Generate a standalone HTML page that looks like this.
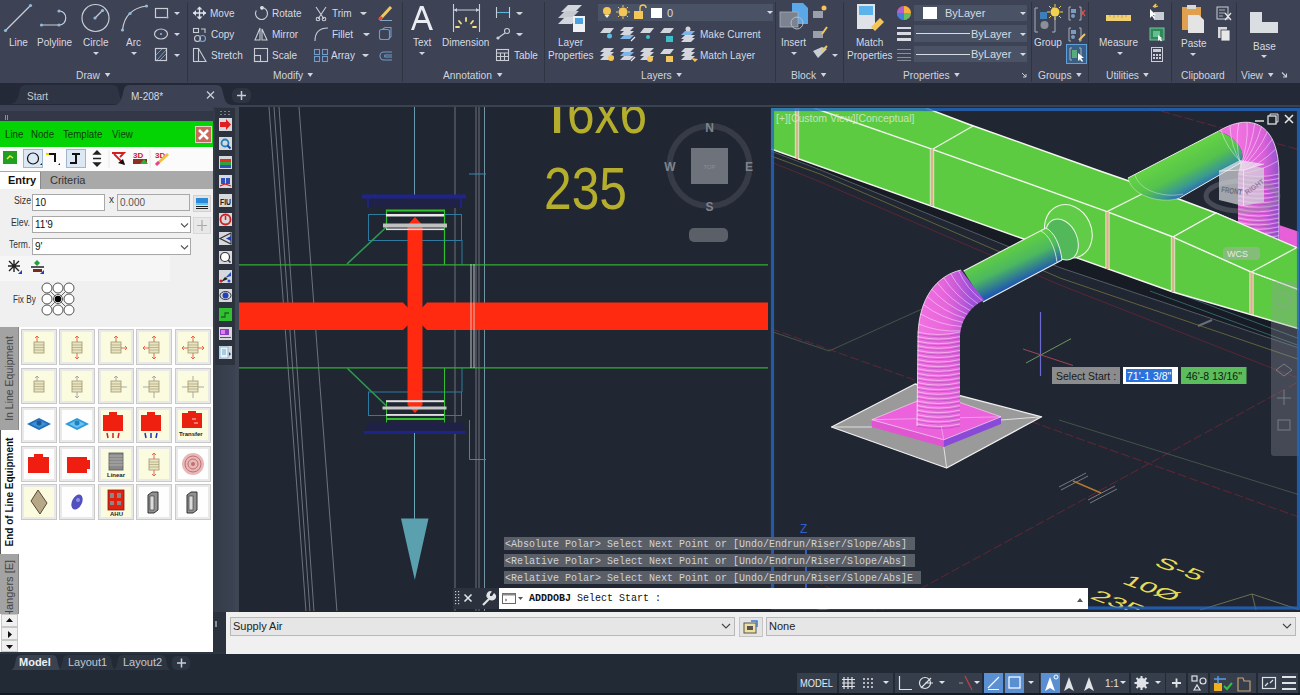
<!DOCTYPE html>
<html><head><meta charset="utf-8">
<style>
*{margin:0;padding:0;box-sizing:border-box}
html,body{width:1300px;height:695px;overflow:hidden;background:#222a35;font-family:"Liberation Sans",sans-serif}
.a{position:absolute}
#ribbon{left:0;top:0;width:1300px;height:83px;background:#3d4255}
.sep{position:absolute;top:2px;width:1px;height:80px;background:#2e3542}
.rt{position:absolute;color:#d6dbe3;font-size:11px;line-height:13px;white-space:nowrap;transform:scaleX(.91);transform-origin:0 0}
.pl{position:absolute;top:69px;color:#cfd5de;font-size:11px;line-height:13px;white-space:nowrap;transform:scaleX(.93);transform-origin:0 0}
.dd{display:inline-block;width:0;height:0;border-left:3px solid transparent;border-right:3px solid transparent;border-top:4px solid #d0d5dd;vertical-align:middle;margin-left:5px;position:relative;top:-1px}
.ar{position:absolute;width:0;height:0;border-left:3px solid transparent;border-right:3px solid transparent;border-top:3px solid #d0d5dd}
#tabs{left:0;top:83px;width:1300px;height:24px;background:#242937}
#draw{left:0;top:107px;width:1300px;height:505px;background:#212633}
svg{position:absolute;overflow:visible}
</style></head><body>
<div id="ribbon" class="a">
  <div class="sep" style="left:187px"></div>
  <div class="sep" style="left:402px"></div>
  <div class="sep" style="left:544px"></div>
  <div class="sep" style="left:775px"></div>
  <div class="sep" style="left:843px"></div>
  <div class="sep" style="left:1031px"></div>
  <div class="sep" style="left:1088px"></div>
  <div class="sep" style="left:1171px"></div>
  <div class="sep" style="left:1236px"></div>
  <!-- Draw -->
  <div class="rt" style="left:9px;top:36px">Line</div>
  <div class="rt" style="left:37px;top:36px">Polyline</div>
  <div class="rt" style="left:83px;top:36px">Circle</div>
  <div class="rt" style="left:126px;top:36px">Arc</div>
  <div class="ar" style="left:93px;top:52px"></div>
  <div class="ar" style="left:131px;top:52px"></div>
  <div class="pl" style="left:76px">Draw<span class="dd"></span></div>
  <!-- Modify -->
  <div class="rt" style="left:210px;top:7px">Move</div>
  <div class="rt" style="left:211px;top:28px">Copy</div>
  <div class="rt" style="left:211px;top:49px">Stretch</div>
  <div class="rt" style="left:272px;top:7px">Rotate</div>
  <div class="rt" style="left:272px;top:28px">Mirror</div>
  <div class="rt" style="left:272px;top:49px">Scale</div>
  <div class="rt" style="left:332px;top:7px">Trim</div>
  <div class="rt" style="left:332px;top:28px">Fillet</div>
  <div class="rt" style="left:331px;top:49px">Array</div>
  <div class="ar" style="left:361px;top:12px"></div>
  <div class="ar" style="left:364px;top:33px"></div>
  <div class="ar" style="left:363px;top:54px"></div>
  <div class="pl" style="left:273px">Modify<span class="dd"></span></div>
  <!-- Annotation -->
  <div class="rt" style="left:413px;top:36px">Text</div>
  <div class="rt" style="left:442px;top:36px">Dimension</div>
  <div class="rt" style="left:514px;top:49px">Table</div>
  <div class="ar" style="left:419px;top:52px"></div>
  <div class="ar" style="left:517px;top:12px"></div>
  <div class="ar" style="left:517px;top:33px"></div>
  <div class="pl" style="left:443px">Annotation<span class="dd"></span></div>
  <!-- Layers -->
  <div class="rt" style="left:558px;top:36px">Layer</div>
  <div class="rt" style="left:548px;top:49px">Properties</div>
  <div class="rt" style="left:700px;top:28px">Make Current</div>
  <div class="rt" style="left:700px;top:49px">Match Layer</div>
  <div class="pl" style="left:641px">Layers<span class="dd"></span></div>
  <!-- Block -->
  <div class="rt" style="left:781px;top:36px">Insert</div>
  <div class="ar" style="left:791px;top:52px"></div>
  <div class="pl" style="left:791px">Block<span class="dd"></span></div>
  <!-- Properties -->
  <div class="rt" style="left:856px;top:36px">Match</div>
  <div class="rt" style="left:847px;top:49px">Properties</div>
  <div class="pl" style="left:903px">Properties<span class="dd"></span></div>
  <!-- Groups -->
  <div class="rt" style="left:1034px;top:36px">Group</div>
  <div class="pl" style="left:1038px">Groups<span class="dd"></span></div>
  <!-- Utilities -->
  <div class="rt" style="left:1099px;top:36px">Measure</div>
  <div class="ar" style="left:1117px;top:52px"></div>
  <div class="pl" style="left:1106px">Utilities<span class="dd"></span></div>
  <!-- Clipboard -->
  <div class="rt" style="left:1181px;top:37px">Paste</div>
  <div class="ar" style="left:1190px;top:53px"></div>
  <div class="pl" style="left:1181px">Clipboard</div>
  <!-- View -->
  <div class="rt" style="left:1253px;top:40px">Base</div>
  <div class="ar" style="left:1261px;top:55px"></div>
  <div class="pl" style="left:1241px">View<span class="dd"></span></div>
</div>
<svg class="a" style="left:0;top:0" width="1300" height="83" viewBox="0 0 1300 83">
 <g fill="none" stroke="#c9ced6" stroke-width="1.2">
  <!-- Line -->
  <line x1="5.5" y1="30.5" x2="30.5" y2="5.5"/>
  <!-- Polyline -->
  <path d="M41.5 25 H59 C 68 25 68 11 59 11"/>
  <!-- Circle -->
  <circle cx="95.5" cy="18" r="13.5"/>
  <line x1="95" y1="18" x2="102.5" y2="10.5"/>
  <!-- Arc -->
  <path d="M122.5 30 C 124 17 132 8 146.5 6"/>
  <!-- rect/ellipse/hatch -->
  <rect x="155.5" y="8.5" width="12" height="9"/>
  <ellipse cx="161" cy="34" rx="6.5" ry="5"/>
  <rect x="155.5" y="48.5" width="11" height="12"/>
 </g>
 <g fill="#8fb9de">
  <circle cx="5.5" cy="30.5" r="1.6"/><circle cx="30.5" cy="5.5" r="1.6"/>
  <circle cx="41.5" cy="25" r="1.6"/><circle cx="59" cy="25" r="1.6"/><circle cx="59" cy="11" r="1.6"/>
  <circle cx="95" cy="18" r="1.6"/><circle cx="102.5" cy="10.5" r="1.6"/>
  <circle cx="122.5" cy="30" r="1.6"/><circle cx="130" cy="13.5" r="1.6"/><circle cx="146.5" cy="6" r="1.6"/>
  <circle cx="167.5" cy="17.5" r="1"/><circle cx="161" cy="34" r="1"/>
 </g>
 <path d="M157 60 L166 50 M156 55 L162 49 M160 60 L166 54" stroke="#7a9bbb" stroke-width="1" fill="none"/>
 <g fill="#d0d5dd">
  <path d="M174 12 h6 l-3 3z"/><path d="M174 33 h6 l-3 3z"/><path d="M174 54 h6 l-3 3z"/>
 </g>
 <!-- Modify icons -->
 <g fill="none" stroke="#dfe3ea" stroke-width="1.3">
  <path d="M193 13 H206 M199.5 7 V19"/>
 </g>
 <circle cx="262" cy="7.8" r="1.9" fill="#e8ecf2"/><g fill="#dfe3ea"><path d="M193 13 l3 -3 v6z M206 13 l-3 -3 v6z M199.5 6.5 l-3 3 h6z M199.5 19.5 l-3 -3 h6z"/></g>
 <g fill="none" stroke="#c9ced6" stroke-width="1.1">
  <path d="M261.5 7.5 A6 6 0 1 1 256.3 10.5"/>
  <rect x="193.5" y="28.5" width="5" height="4"/>
  <circle cx="197.5" cy="38.5" r="3"/><circle cx="202.5" cy="38.5" r="3" stroke="#7fa5c9"/>
  <path d="M201 29 h4 v4"/>
  <path d="M255 40 L260 28 L260 40 Z M262 40 L262 29 L267 40 Z"/>
  <path d="M316 7 L324 19 M326 7 L318 19"/><circle cx="318" cy="19" r="1.8"/><circle cx="324" cy="19" r="1.8"/>
  <path d="M315 41 C 315 31 320 28 328 28"/>
  <rect x="193.5" y="48.5" width="5" height="13"/><path d="M198.5 48.5 L206 61.5 H198.5"/>
  <rect x="254.5" y="48.5" width="13" height="13"/><rect x="254.5" y="55.5" width="6" height="6"/>
 </g>
 <g fill="none" stroke="#6f9dc8" stroke-width="1.1">
  <rect x="314.5" y="49.5" width="5" height="5"/><rect x="322.5" y="49.5" width="5" height="5"/>
  <rect x="314.5" y="56.5" width="5" height="5"/><rect x="322.5" y="56.5" width="5" height="5"/>
  <rect x="379.5" y="29.5" width="10" height="10" rx="2"/><path d="M382 29.5 l3 -2 h6 v9 l-2 2"/>
  <path d="M392 52 H384 A4 4 0 0 0 384 60 H392 M392 55 H385 A1.5 1.5 0 0 0 385 57 H392"/>
 </g>
 <path d="M380 19 L391 7" stroke="#f0c860" stroke-width="3"/>
 <path d="M379 20 L382 17" stroke="#e24a3a" stroke-width="3"/>
 <line x1="380" y1="20.5" x2="392" y2="20.5" stroke="#7fa5c9" stroke-width="1"/>
 <g fill="#d0d5dd"><path d="M360 12 h6 l-3 3z"/><path d="M363 33 h6 l-3 3z"/><path d="M362 54 h6 l-3 3z"/></g>
 <!-- Annotation -->
 <path d="M411 30 L420 6 H423.5 L433 30 H429.5 L427 23 H416.5 L414 30 Z M417.8 20 H425.8 L421.8 9.5 Z" fill="#e9ecf0"/>
 <g stroke="#c9ced6" stroke-width="1.1" fill="none">
  <path d="M453.5 4 V32 M479.5 4 V32 M454 10 H479"/>
  <path d="M496.5 7 V18 M509.5 7 V18" />
  <circle cx="507" cy="31" r="2.5"/><path d="M505 33 L498 38"/>
  <rect x="496.5" y="49.5" width="12" height="11"/><path d="M496.5 53 H508.5 M496.5 56.5 H508.5 M500.5 53 V60.5 M504.5 53 V60.5"/>
 </g>
 <path d="M497 12.5 H509" stroke="#5fb6d9" stroke-width="1.1"/>
 <g fill="#c9ced6"><path d="M454 10 l3 -2 v4z M479 10 l-3 -2 v4z"/><circle cx="498" cy="38" r="1.6"/></g>
 <g stroke="#f2df8a" stroke-width="1.8" stroke-linecap="round">
  <path d="M466 18 V21 M459 21 L461 23.5 M473 21 L471 23.5 M456 27 H459 M473 27 H476"/>
 </g>
 <g fill="#d0d5dd"><path d="M516 12 h6 l-3 3z"/><path d="M516 33 h6 l-3 3z"/></g>
 <!-- Layers -->
 <g fill="#d3d6dc">
  <path d="M561 12 L568 5 H582 L575 12 Z"/>
  <path d="M558 18 L565 11 H579 L572 18 Z" fill="#c6c9cf"/>
  <path d="M558 24 L565 17 H579 L572 24 Z"/>
 </g>
 <rect x="573" y="16" width="12" height="16" fill="#eef0f3"/>
 <rect x="575" y="18" width="8" height="6" fill="#4aa3e0"/>
 <rect x="598" y="4" width="175" height="17" fill="#4a5366"/>
 <path d="M767 11 h6 l-3 3z" fill="#d8dce2"/>
 <circle cx="607" cy="11" r="4" fill="#f4c65a"/><path d="M604.5 15 h5 l-2.5 3z" fill="#eee"/>
 <circle cx="623" cy="12" r="4.5" fill="#f4c65a"/>
 <g stroke="#f4c65a" stroke-width="1"><path d="M623 5 v2 M623 17 v2 M616 12 h2 M628 12 h2 M618 7 l1.5 1.5 M628 7 l-1.5 1.5 M618 17 l1.5 -1.5 M628 17 l-1.5 -1.5"/></g>
 <rect x="634" y="11" width="9" height="8" fill="#f4c65a"/><path d="M640 11 v-3 a3 3 0 0 1 6 0" stroke="#f4c65a" stroke-width="1.4" fill="none"/>
 <rect x="651" y="8" width="11" height="10" fill="#fff"/>
 <text x="667" y="17" font-size="11" fill="#d6dbe3" font-family="Liberation Sans">0</text>
 <g fill="#d3d6dc">
  <path d="M600 33 L604 28 H614 L610 33Z"/><path d="M640 33 L644 28 H654 L650 33Z"/><path d="M660 33 L664 28 H674 L670 33Z"/>
  <path d="M620 31 L624 27 H634 L630 31Z"/><path d="M620 35 L624 31 H634 L630 35Z"/><path d="M620 39 L624 35 H634 L630 39Z" fill="#7fb4e6"/>
  <path d="M681 35 L685 31 H695 L691 35Z" fill="#7fb4e6"/><path d="M681 39 L685 35 H695 L691 39Z"/><path d="M681 42 L685 38 H695 L691 42Z"/>
  <path d="M600 52 L604 48 H614 L610 52Z"/><path d="M600 56 L604 52 H614 L610 56Z"/><path d="M600 60 L604 56 H614 L610 60Z"/>
  <path d="M620 52 L624 48 H634 L630 52Z"/><path d="M620 56 L624 52 H634 L630 56Z" fill="#7fb4e6"/><path d="M620 60 L624 56 H634 L630 60Z"/>
  <path d="M640 52 L644 48 H654 L650 52Z"/><path d="M640 56 L644 52 H654 L650 56Z"/><path d="M640 60 L644 56 H654 L650 60Z"/>
  <path d="M660 54 L664 49 H674 L670 54Z"/>
  <path d="M681 52 L685 48 H695 L691 52Z"/><path d="M681 56 L685 52 H695 L691 56Z"/><path d="M681 60 L685 56 H695 L691 60Z"/>
 </g>
 <circle cx="609.5" cy="36" r="2.5" fill="#58c0e0"/>
 <circle cx="648" cy="37" r="2" fill="#3fc0c8"/>
 <rect x="666" y="36" width="7" height="6" fill="#3fc0c8"/>
 <circle cx="688" cy="29" r="2.5" fill="#d3d6dc"/>
 <circle cx="611" cy="58" r="3" fill="#f4c65a"/>
 <circle cx="650" cy="59" r="3" fill="#f4c65a"/>
 <rect x="666" y="56" width="7" height="6" fill="#f4c65a"/>
 <path d="M691 58 l4 4 l3 -3 z" fill="#f4c65a"/>
 <path d="M631 41 l4 -4 M631 61 l4 -4" stroke="#eee" stroke-width="1.2"/>
 <!-- Block -->
 <path d="M792 3 H803 L808 8 V24 H792Z" fill="#5aa8e8"/>
 <rect x="780" y="12" width="18" height="15" fill="#7b8290" stroke="#aab0bb" stroke-width="0.8"/>
 <circle cx="797" cy="23" r="6" fill="none" stroke="#b8bec8" stroke-width="1"/>
 <g fill="#9aa0aa"><rect x="813" y="11" width="10" height="7"/><rect x="813" y="31" width="10" height="7"/></g>
 <circle cx="824" cy="8" r="2.5" fill="#f4c65a"/>
 <path d="M822 34 L827 27" stroke="#f4c65a" stroke-width="2"/>
 <path d="M813 51 L818 58 L827 49 L822 47Z" fill="#c9ced6"/><path d="M821 52 L827 46" stroke="#f4c65a" stroke-width="2"/>
 <g fill="#d0d5dd"><path d="M832 54 h6 l-3 3z"/></g>
 <!-- Properties -->
 <rect x="857" y="4" width="18" height="25" fill="#dfe2e6"/>
 <rect x="859" y="6" width="14" height="9" fill="#5cb3ea"/>
 <path d="M871 27 L880 18 L884 22 L875 31Z" fill="#f4c65a"/>
 <circle cx="904" cy="13" r="7" fill="#e05050"/>
 <path d="M904 13 L904 6 A7 7 0 0 1 911 13Z" fill="#f4b040"/>
 <path d="M904 13 L911 13 A7 7 0 0 1 904 20Z" fill="#60c060"/>
 <path d="M904 13 L904 20 A7 7 0 0 1 897 13Z" fill="#4080e0"/>
 <path d="M904 13 L897 13 A7 7 0 0 1 904 6Z" fill="#b060d0"/>
 <g fill="#d8dce2"><rect x="897" y="27" width="14" height="2"/><rect x="897" y="32" width="14" height="3"/><rect x="897" y="38" width="14" height="3"/></g>
 <g fill="#8a909a"><rect x="897" y="49" width="14" height="1"/><rect x="897" y="53" width="14" height="1"/><rect x="897" y="57" width="14" height="1"/><rect x="897" y="60" width="14" height="1"/></g>
 <rect x="914" y="5" width="113" height="16" fill="#4a5366"/>
 <rect x="914" y="25" width="113" height="17" fill="#4a5366"/>
 <rect x="914" y="46" width="113" height="16" fill="#4a5366"/>
 <rect x="923" y="7" width="14" height="12" fill="#fff"/>
 <path d="M916 33.5 H970 M916 54.5 H970" stroke="#d8dce2" stroke-width="1"/>
 <g fill="#d8dce2"><path d="M1020 12 h6 l-3 3z"/><path d="M1020 33 h6 l-3 3z"/><path d="M1020 53 h6 l-3 3z"/></g>
 <g font-family="Liberation Sans" font-size="11" fill="#d6dbe3">
  <text x="945" y="17">ByLayer</text><text x="971" y="38">ByLayer</text><text x="971" y="58">ByLayer</text>
 </g>
 <path d="M1022 73 l4 4 M1026 74 v3 h-3" stroke="#c9ced6" stroke-width="1" fill="none"/>
 <!-- Groups -->
 <path d="M1038 8 h-3 v24 h3 M1052 8 h3 v24 h-3" stroke="#aab0bb" stroke-width="1" fill="none"/>
 <rect x="1040" y="12" width="7" height="7" fill="#3f7fb8"/>
 <circle cx="1044.5" cy="25" r="4" fill="#8a909a"/>
 <circle cx="1055" cy="12" r="4.5" fill="#f4d050"/>
 <g stroke="#f4d050" stroke-width="1"><path d="M1055 4v3 M1055 17v3 M1047 12h3 M1060 12h3 M1049 6l2 2 M1061 6l-2 2 M1049 18l2 -2 M1061 18l-2 -2"/></g>
 <g fill="none" stroke="#aab0bb" stroke-width="1">
  <path d="M1071 7 h-2 v13 h2 M1079 7 h2 v13 h-2"/><path d="M1071 28 h-2 v13 h2 M1079 28 h2 v13 h-2"/>
 </g>
 <g fill="#7b9cc0"><rect x="1071" y="9" width="5" height="4"/><circle cx="1073" cy="16" r="2"/><rect x="1071" y="30" width="5" height="4"/><circle cx="1073" cy="37" r="2"/></g>
 <path d="M1081 10 l4 6 M1085 10 l-4 6" stroke="#e05050" stroke-width="1.3"/>
 <path d="M1079 40 l6 -6" stroke="#f4c65a" stroke-width="2"/>
 <rect x="1066.5" y="44.5" width="20" height="19" fill="#3a5f85" stroke="#5fa0dc" stroke-width="1"/>
 <path d="M1072 48 h-2 v12 h2 M1079 48 h2 v12 h-2" stroke="#aab0bb" stroke-width="1" fill="none"/>
 <rect x="1072" y="50" width="5" height="8" fill="#5aaa80"/>
 <path d="M1078 53 v8 l2 -2 l2 3 l1 -1 l-2 -3 h3z" fill="#fff"/>
 <!-- Utilities -->
 <rect x="1106" y="15" width="25" height="6" fill="#f0d070"/>
 <g stroke="#b89a40" stroke-width="0.8"><path d="M1110 15v2 M1114 15v3 M1118 15v2 M1122 15v3 M1126 15v2"/></g>
 <rect x="1154" y="12" width="10" height="8" fill="#c9ced6"/>
 <path d="M1150 9 v9 l2 -2 l2 3 l1 -1 l-2 -3 h3z" fill="#fff"/>
 <path d="M1153 7 l3 -3 l-1 3 l3 -1" stroke="#f4c65a" stroke-width="1.2" fill="none"/>
 <rect x="1150" y="28" width="14" height="12" fill="#2f8a5a" stroke="#7fc0a0" stroke-width="1"/>
 <rect x="1153" y="31" width="7" height="6" fill="#60c090"/>
 <path d="M1158 35 v6 l1.5 -1.5 l1.5 2 l1 -1 l-1.5 -2 h2z" fill="#fff"/>
 <rect x="1151.5" y="47.5" width="11" height="14" fill="none" stroke="#c9ced6" stroke-width="1"/>
 <rect x="1153" y="49" width="8" height="3" fill="#c9ced6"/>
 <g fill="#c9ced6"><rect x="1153" y="54" width="2" height="2"/><rect x="1156" y="54" width="2" height="2"/><rect x="1159" y="54" width="2" height="2"/><rect x="1153" y="57" width="2" height="2"/><rect x="1156" y="57" width="2" height="2"/><rect x="1159" y="57" width="2" height="2"/></g>
 <!-- Clipboard -->
 <rect x="1182" y="7" width="19" height="23" fill="#e0a050"/>
 <rect x="1187" y="5" width="9" height="4" fill="#d8d8d8"/>
 <path d="M1188 15 H1199 L1204 20 V33 H1188Z" fill="#e4e4e4"/>
 <rect x="1217" y="7" width="11" height="12" fill="none" stroke="#c9ced6" stroke-width="1"/>
 <path d="M1219 10h6 M1219 13h6 M1219 16h4" stroke="#c9ced6" stroke-width="0.8"/>
 <path d="M1225 13 l6 7 M1231 13 l-6 7" stroke="#e8e8e8" stroke-width="1.2"/>
 <rect x="1218" y="27" width="9" height="11" fill="#d8d8d8"/><rect x="1221" y="30" width="9" height="11" fill="#e8e8e8" stroke="#3b4353" stroke-width="0.8"/>
 <!-- View -->
 <path d="M1250 12 H1262 V22 H1278 V33 H1250Z" fill="#dadde2"/>
 <path d="M1282 72.5 l4.5 4.5 M1286.5 73.5 v3.5 h-3.5" stroke="#c9ced6" stroke-width="1.1" fill="none"/>
</svg>
<div id="tabs" class="a">
 <svg class="a" style="left:0;top:0" width="1300" height="24">
  <path d="M10 21 Q16 21 18 14 L20 6 Q21 2 26 2 H112 Q117 2 118 6 L120 14 Q122 21 128 21 Z" fill="#2f3444"/>
  <path d="M114 22 Q120 22 122 14 L124 6 Q125 2 130 2 H216 Q221 2 222 6 L224 14 Q226 22 232 22 Z" fill="#3c4153"/>
  <rect x="232" y="5" width="19" height="15" rx="6" fill="#2e3542"/>
  <path d="M237 12.5 H246 M241.5 8 V17" stroke="#c9ced6" stroke-width="1.5"/>
  <path d="M207 8.5 L214 15.5 M214 8.5 L207 15.5" stroke="#c9ced6" stroke-width="1.3"/>
  <rect x="0" y="22" width="1300" height="2" fill="#3c4153"/>
 </svg>
 <div class="rt" style="left:27px;top:7px;color:#c3c8d0">Start</div>
 <div class="rt" style="left:131px;top:7px;color:#d6dbe3">M-208*</div>
</div>
<div id="draw" class="a"></div>
<div class="a" style="left:213px;top:107px;width:26px;height:505px;background:linear-gradient(90deg,#343b48,#3d4554)"></div>
<div class="a" style="left:0;top:107px;width:213px;height:545px;background:#fff"></div>
<div class="a" style="left:0;top:107px;width:213px;height:14px;background:linear-gradient(#3d4354 0,#3d4354 4px,#323848 4px)"></div>
<div class="a" style="left:5px;top:115px;width:3px;height:5px;border-left:1px solid #8a909a;border-right:1px solid #8a909a"></div>
<div class="a" style="left:0;top:121px;width:213px;height:26px;background:#04d404"></div>
<div class="a" style="left:5px;top:128px;font-size:11px;line-height:13px;color:#0b3f0b;white-space:nowrap;transform:scaleX(.88);transform-origin:0 0">Line</div>
<div class="a" style="left:31px;top:128px;font-size:11px;line-height:13px;color:#0b3f0b;white-space:nowrap;transform:scaleX(.88);transform-origin:0 0">Node</div>
<div class="a" style="left:63px;top:128px;font-size:11px;line-height:13px;color:#0b3f0b;white-space:nowrap;transform:scaleX(.88);transform-origin:0 0">Template</div>
<div class="a" style="left:112px;top:128px;font-size:11px;line-height:13px;color:#0b3f0b;white-space:nowrap;transform:scaleX(.88);transform-origin:0 0">View</div>
<svg class="a" style="left:195px;top:126px" width="17" height="17">
 <rect x="0.5" y="0.5" width="16" height="16" fill="#c76a5a" stroke="#e8d0c8"/>
 <path d="M4 4 L13 13 M13 4 L4 13" stroke="#fff" stroke-width="2.6"/>
</svg>
<!-- toolbar -->
<div class="a" style="left:0;top:147px;width:213px;height:24px;background:#fbfbfb"></div>
<svg class="a" style="left:0;top:147px" width="213" height="24">
 <rect x="3" y="4" width="14" height="13" fill="#20a020"/><path d="M7 12 l3 -3 l3 2" stroke="#e0f040" stroke-width="1.5" fill="none"/>
 <rect x="23.5" y="2.5" width="19" height="18" fill="#dce8f4" stroke="#9fb6cf"/>
 <circle cx="33" cy="11.5" r="5.5" fill="none" stroke="#111" stroke-width="1.2"/>
 <path d="M40 18 l2 -2 v2z" fill="#222"/>
 <path d="M48 7 H55 V15" stroke="#111" stroke-width="2" fill="none"/><path d="M46 7 h3" stroke="#f0d000" stroke-width="2"/>
 <path d="M58 18 l2 -2 v2z" fill="#222"/>
 <rect x="66.5" y="2.5" width="19" height="18" fill="#dce8f4" stroke="#9fb6cf"/>
 <path d="M72 7 H80 M76 7 V16 M70 16 H77" stroke="#111" stroke-width="2" fill="none"/>
 <path d="M97 4 l-3 3 h6z M97 19 l-3 -3 h6z M93 11.5 h8" stroke="#222" fill="#222" stroke-width="1.4"/>
 <path d="M112 6 H124 L120 10 M114 7 L124 17" stroke="#d02020" stroke-width="1.8" fill="none"/><path d="M118 16 L125 18 L123 12z" fill="#111"/>
 <text x="133" y="11" font-size="8" font-weight="bold" fill="#d02020" font-family="Liberation Sans">3D</text>
 <rect x="133" y="12" width="14" height="5" fill="#8a3020"/><path d="M140 17 l4 -5 l4 5z" fill="#30b030"/>
 <text x="155" y="11" font-size="8" font-weight="bold" fill="#d02020" font-family="Liberation Sans">3D</text>
 <path d="M157 17 L168 7" stroke="#f0c040" stroke-width="3"/><path d="M156 18 l3 -3" stroke="#e040a0" stroke-width="3"/>
 <line x1="109" y1="3" x2="109" y2="21" stroke="#e8e8e8"/>
 <line x1="150" y1="3" x2="150" y2="21" stroke="#e8e8e8"/>
</svg>
<!-- tabs Entry/Criteria -->
<div class="a" style="left:0;top:171px;width:213px;height:18px;background:#a9a9a9"></div>
<div class="a" style="left:0;top:172px;width:41px;height:17px;background:#fff;border-right:1px solid #8a8a8a"></div>
<div class="a" style="left:8px;top:174px;font-size:11px;line-height:13px;font-weight:bold;color:#111">Entry</div>
<div class="a" style="left:50px;top:174px;font-size:11px;line-height:13px;color:#333">Criteria</div>
<div class="a" style="left:0;top:189px;width:213px;height:138px;background:#f0f0f0"></div>
<!-- fields -->
<div class="a" style="left:14px;top:195px;font-size:10px;line-height:12px;color:#333;transform:scaleX(.88);transform-origin:0 0">Size</div>
<div class="a" style="left:32px;top:194px;width:73px;height:17px;background:#fff;border:1px solid #a8a8a8;font-size:10px;line-height:15px;padding-left:2px;color:#111">10</div>
<div class="a" style="left:109px;top:194px;font-size:10px;line-height:12px;color:#333">x</div>
<div class="a" style="left:117px;top:194px;width:73px;height:17px;background:#f0f0f0;border:1px solid #a8a8a8;font-size:10px;line-height:15px;padding-left:2px;color:#555">0.000</div>
<div class="a" style="left:193px;top:195px;width:18px;height:17px;background:#e4e4e4;border:1px solid #d0d0d0"></div>
<svg class="a" style="left:195px;top:197px" width="14" height="13"><rect x="1" y="1" width="12" height="5" fill="#2a8ad8"/><rect x="1" y="6" width="12" height="2" fill="#6ac0f0"/><path d="M1 9.5 H13 M1 11.5 H13" stroke="#222"/></svg>
<div class="a" style="left:11px;top:217px;font-size:10px;line-height:12px;color:#333;transform:scaleX(.88);transform-origin:0 0">Elev.</div>
<div class="a" style="left:32px;top:216px;width:159px;height:17px;background:#fff;border:1px solid #a8a8a8;font-size:10px;line-height:15px;padding-left:2px;color:#111">11'9</div>
<div class="a" style="left:193px;top:217px;width:18px;height:17px;background:#e8e8e8;border:1px solid #d8d8d8"></div>
<svg class="a" style="left:195px;top:219px" width="14" height="13"><path d="M2 6.5 H12 M7 1 V12" stroke="#aaa" stroke-width="1.2"/></svg>
<div class="a" style="left:9px;top:239px;font-size:10px;line-height:12px;color:#333;transform:scaleX(.85);transform-origin:0 0">Term.</div>
<div class="a" style="left:32px;top:238px;width:159px;height:17px;background:#fff;border:1px solid #a8a8a8;font-size:10px;line-height:15px;padding-left:2px;color:#111">9'</div>
<svg class="a" style="left:180px;top:222px" width="10" height="30"><path d="M1 1.5 L4.5 5 L8 1.5 M1 23.5 L4.5 27 L8 23.5" stroke="#555" fill="none" stroke-width="1.1"/></svg>
<div class="a" style="left:0;top:256px;width:170px;height:25px;background:#f6f6f6"></div>
<svg class="a" style="left:0;top:256px" width="60" height="25">
 <path d="M9 5 L19 15 M19 5 L9 15 M14 4 V16 M8 10 H20" stroke="#222" stroke-width="1.4"/>
 <path d="M18 18 l4 -4 v4z" fill="#2040c0"/>
 <path d="M37 4 l3 3 l-3 3 l-3 -3z" fill="#20a040"/>
 <path d="M31 11 H44" stroke="#222" stroke-width="1.5"/><rect x="33" y="13" width="9" height="3" fill="#7a2a1a"/>
 <path d="M40 18 l4 -4 v4z" fill="#2040c0"/>
</svg>
<div class="a" style="left:13px;top:294px;font-size:10px;line-height:12px;color:#333;transform:scaleX(.82);transform-origin:0 0">Fix By</div>
<svg class="a" style="left:40px;top:282px" width="36" height="36">
 <path d="M7 6 L29 28 M29 6 L7 28" stroke="#444" stroke-width="0.8"/>
 <g fill="#fff" stroke="#555" stroke-width="1">
  <circle cx="7" cy="6" r="5"/><circle cx="18" cy="6" r="5"/><circle cx="29" cy="6" r="5"/>
  <circle cx="7" cy="17" r="5"/><circle cx="29" cy="17" r="5"/>
  <circle cx="7" cy="28" r="5"/><circle cx="18" cy="28" r="5"/><circle cx="29" cy="28" r="5"/>
  <circle cx="18" cy="17" r="4.5"/>
 </g>
 <circle cx="18" cy="17" r="3.3" fill="#000"/>
</svg>
<!-- left vertical tabs -->
<div class="a" style="left:0;top:327px;width:19px;height:103px;background:#a3a3a3;border-right:1px solid #888"></div>
<div class="a" style="left:0;top:430px;width:19px;height:124px;background:#fff;border-left:1px solid #555"></div>
<div class="a" style="left:0;top:554px;width:19px;height:60px;background:#a3a3a3;border-right:1px solid #888"></div>
<div class="a" style="left:19px;top:327px;width:1px;height:325px;background:#fff"></div>
<div class="a" style="left:3px;top:430px;width:14px;height:0;transform-origin:0 0;transform:rotate(-90deg)"></div>
<div class="a" style="left:2px;top:430px;width:103px;height:15px;transform-origin:0 0;transform:rotate(-90deg);font-size:10.5px;line-height:15px;color:#444;text-align:center;white-space:nowrap">In Line Equipment</div>
<div class="a" style="left:2px;top:554px;width:124px;height:15px;transform-origin:0 0;transform:rotate(-90deg);font-size:10px;line-height:15px;color:#111;font-weight:bold;text-align:center;white-space:nowrap">End of Line Equipment</div>
<div class="a" style="left:2px;top:614px;width:60px;height:15px;transform-origin:0 0;transform:rotate(-90deg);font-size:11px;line-height:15px;color:#444;text-align:left;white-space:nowrap;overflow:hidden;text-indent:-4px">Hangers [E]</div>
<div class="a" style="left:1px;top:614px;width:17px;height:13px;background:#f0f0f0;border:1px solid #c8c8c8"></div>
<div class="a" style="left:1px;top:627px;width:17px;height:13px;background:#f0f0f0;border:1px solid #c8c8c8"></div>
<div class="a" style="left:1px;top:640px;width:17px;height:12px;background:#f0f0f0;border:1px solid #c8c8c8"></div>
<svg class="a" style="left:1px;top:614px" width="17" height="38"><path d="M5 8 h7 l-3.5 -4z M7 17 v7 l4 -3.5z M5 31 h7 l-3.5 4z" fill="#111"/></svg>
<!-- tiles -->
<svg class="a" style="left:20px;top:327px" width="193" height="196">
 <defs>
  <g id="tb"><rect x="0.5" y="0.5" width="35" height="35" fill="#e9e9e9" stroke="#c9c9c9"/><rect x="3" y="3" width="30" height="30" fill="#fbfbdf"/></g>
  <g id="tw"><rect x="0.5" y="0.5" width="35" height="35" fill="#e9e9e9" stroke="#c9c9c9"/><rect x="3" y="3" width="30" height="30" fill="#fefefe"/></g>
  <g id="ga"><rect x="13" y="13" width="10" height="11" fill="#e8e3c0" stroke="#a09870" stroke-width="0.8"/><path d="M13 16h10 M13 18.5h10 M13 21h10" stroke="#a09870" stroke-width="0.6"/></g>
 </defs>
 <!-- row1 -->
 <use href="#tb" x="1" y="2"/><use href="#tb" x="39" y="2"/><use href="#tb" x="78" y="2"/><use href="#tb" x="116" y="2"/><use href="#tb" x="155" y="2"/>
 <use href="#ga" x="1" y="2"/><use href="#ga" x="39" y="2"/><use href="#ga" x="78" y="2"/><use href="#ga" x="116" y="2"/><use href="#ga" x="155" y="2"/>
 <g fill="none" stroke="#e05a40" stroke-width="0.9">
  <path d="M17 15 v-6 M15 11 l2 -2 l2 2"/>
  <path d="M57 15 v-6 M55 11 l2 -2 l2 2 M57 26 v6 M55 30 l2 2 l2 -2"/>
  <path d="M96 15 v-6 M94 11 l2 -2 l2 2 M101 21 h6 M105 19 l2 2 l-2 2"/>
  <path d="M134 15 v-6 M132 11 l2 -2 l2 2 M134 26 v6 M132 30 l2 2 l2 -2 M129 21 h-6 M125 19 l-2 2 l2 2"/>
  <path d="M173 15 v-6 M171 11 l2 -2 l2 2 M173 26 v6 M171 30 l2 2 l2 -2 M168 21 h-6 M164 19 l-2 2 l2 2 M178 21 h6 M182 19 l2 2 l-2 2"/>
 </g>
 <!-- row2 -->
 <use href="#tb" x="1" y="41"/><use href="#tb" x="39" y="41"/><use href="#tb" x="78" y="41"/><use href="#tb" x="116" y="41"/><use href="#tb" x="155" y="41"/>
 <use href="#ga" x="1" y="41"/><use href="#ga" x="39" y="41"/><use href="#ga" x="78" y="41"/><use href="#ga" x="116" y="41"/><use href="#ga" x="155" y="41"/>
 <g fill="none" stroke="#a0a0a0" stroke-width="0.9">
  <path d="M17 54 v-5 M15 51 l2 -2 l2 2"/>
  <path d="M57 54 v-5 M55 51 l2 -2 l2 2 M57 65 v6 M55 69 l2 2 l2 -2"/>
  <path d="M96 54 v-5 M94 51 l2 -2 l2 2 M101 60 h6"/>
  <path d="M134 54 v-5 M132 51 l2 -2 l2 2 M134 65 v6 M129 60 h-6"/>
  <path d="M173 54 v-5 M173 65 v6 M168 60 h-6 M178 60 h6"/>
 </g>
 <!-- row3 -->
 <use href="#tw" x="1" y="80"/><use href="#tw" x="39" y="80"/><use href="#tb" x="78" y="80"/><use href="#tb" x="116" y="80"/><use href="#tb" x="155" y="80"/>
 <path d="M7 97 L19 91 L31 97 L19 103Z" fill="#1f6fb8"/><path d="M11 97 L19 93 L27 97 L19 101Z" fill="#3d8fd8"/><circle cx="19" cy="96" r="2.5" fill="#1a5a98"/>
 <path d="M45 97 L57 91 L69 97 L57 103Z" fill="#2a9ad8"/><path d="M49 97 L57 93 L65 97 L57 101Z" fill="#6ac0f0"/><circle cx="57" cy="96" r="2.5" fill="#2080c0"/>
 <path d="M83 88 h6 v-3 h8 v3 h6 v16 h-20z" fill="#f02010"/>
 <path d="M87 106 l1 5 M93 106 v5 M99 106 l-1 5" stroke="#d02020" stroke-width="1.5"/>
 <path d="M121 88 h6 v-3 h8 v3 h6 v16 h-20z" fill="#f02010"/>
 <path d="M125 106 l1 5 M131 106 v5 M137 106 l-1 5" stroke="#2030c0" stroke-width="1.5"/>
 <path d="M162 86 h6 v-2 h8 v2 h6 v15 h-20z" fill="#e82010"/>
 <path d="M172 92 h4 M174 96 h4" stroke="#fff" stroke-width="0.8"/>
 <text x="159" y="109" font-size="6" font-weight="bold" fill="#222" font-family="Liberation Sans">Transfer</text>
 <!-- row4 -->
 <use href="#tw" x="1" y="119"/><use href="#tw" x="39" y="119"/><use href="#tb" x="78" y="119"/><use href="#tb" x="116" y="119"/><use href="#tw" x="155" y="119"/>
 <path d="M8 130 h6 v-3 h9 v3 h6 v16 h-21z" fill="#f01e10"/>
 <path d="M47 130 h20 v3 h3 v9 h-3 v4 h-20z" fill="#f01e10"/>
 <rect x="89" y="126" width="14" height="17" fill="#8a8a8a" stroke="#555" stroke-width="0.8"/>
 <path d="M89 129h14 M89 132h14 M89 135h14 M89 138h14" stroke="#c8c8c8" stroke-width="0.6"/>
 <text x="87" y="150" font-size="6" font-weight="bold" fill="#222" font-family="Liberation Sans">Linear</text>
 <use href="#ga" x="116" y="119"/>
 <path d="M134 132 v-6 M132 128 l2 -2 l2 2 M134 143 v6 M132 147 l2 2 l2 -2" stroke="#e05a40" stroke-width="0.9" fill="none"/>
 <circle cx="173" cy="137" r="11" fill="#e8b8b8"/><circle cx="173" cy="137" r="8" fill="none" stroke="#c07070" stroke-width="1"/><circle cx="173" cy="137" r="5" fill="none" stroke="#c07070" stroke-width="1"/><circle cx="173" cy="137" r="2" fill="#c07070"/>
 <!-- row5 -->
 <use href="#tb" x="1" y="157"/><use href="#tw" x="39" y="157"/><use href="#tb" x="78" y="157"/><use href="#tw" x="116" y="157"/><use href="#tw" x="155" y="157"/>
 <path d="M18 163 L27 176 L20 187 L11 174Z" fill="#b8a88a" stroke="#5a4a30" stroke-width="1"/>
 <ellipse cx="57" cy="175" rx="5" ry="8" transform="rotate(25 57 175)" fill="#5050c0"/><circle cx="58" cy="173" r="2" fill="#9090e0"/>
 <rect x="88" y="163" width="16" height="20" fill="#e02010" stroke="#802010" stroke-width="0.8"/>
 <rect x="90" y="166" width="4" height="5" fill="#888"/><rect x="97" y="166" width="4" height="5" fill="#888"/><rect x="90" y="174" width="4" height="4" fill="#888"/><rect x="97" y="174" width="4" height="4" fill="#888"/>
 <text x="90" y="189" font-size="6" font-weight="bold" fill="#222" font-family="Liberation Sans">AHU</text>
 <path d="M128 168 l4 -3 h6 v18 l-4 3 h-6z" fill="#909090" stroke="#333" stroke-width="1"/><rect x="130" y="169" width="4" height="14" fill="#dcdcdc" stroke="#333" stroke-width="0.6"/>
 <path d="M167 168 l4 -3 h6 v18 l-4 3 h-6z" fill="#909090" stroke="#333" stroke-width="1"/><rect x="169" y="169" width="4" height="14" fill="#dcdcdc" stroke="#333" stroke-width="0.6"/>
</svg>
<svg class="a" style="left:213px;top:107px" width="26" height="262" viewBox="213 107 26 262">
 <rect x="215" y="108" width="20" height="257" fill="#2c333e"/>
 <g fill="#7a8090"><rect x="220" y="111" width="2" height="1"/><rect x="224" y="111" width="2" height="1"/><rect x="228" y="111" width="2" height="1"/><rect x="220" y="114" width="2" height="1"/><rect x="224" y="114" width="2" height="1"/><rect x="228" y="114" width="2" height="1"/></g>
 <g fill="#d6d8dc">
  <rect x="219" y="118" width="13" height="13"/><rect x="219" y="137" width="13" height="13"/><rect x="219" y="156" width="13" height="13"/>
  <rect x="219" y="175" width="13" height="13"/><rect x="219" y="194" width="13" height="13"/><rect x="219" y="213" width="13" height="13"/>
  <rect x="219" y="232" width="13" height="13"/><rect x="219" y="251" width="13" height="13"/><rect x="219" y="270" width="13" height="13"/>
  <rect x="219" y="289" width="13" height="13"/><rect x="219" y="308" width="13" height="13"/><rect x="219" y="327" width="13" height="13"/>
  <rect x="219" y="346" width="13" height="13"/>
 </g>
 <path d="M220 122 h6 v-3 l5 5.5 l-5 5.5 v-3 h-6z" fill="#e02020"/>
 <circle cx="225" cy="143" r="3.5" fill="none" stroke="#2080c0" stroke-width="1.8"/><path d="M227.5 145.5 l3 3" stroke="#2040a0" stroke-width="2"/>
 <path d="M220 159 h11 v3 h-11z" fill="#e03020"/><path d="M220 162 h11 v3 h-11z" fill="#30a040"/><path d="M220 165 h11 v3 h-11z" fill="#3050c0"/>
 <path d="M221 178 h4 v6 h-4z M226 178 h4 v6 h-4z" fill="#3050c0"/><path d="M220 186 l5 -2 l6 2" stroke="#d02020" stroke-width="1.2" fill="none"/>
 <text x="220" y="205" font-family="Liberation Sans" font-size="9" font-weight="bold" fill="#222" textLength="11" lengthAdjust="spacingAndGlyphs">FIU</text>
 <circle cx="225.5" cy="219.5" r="5" fill="none" stroke="#d02020" stroke-width="1.8"/><path d="M225.5 216 v4" stroke="#d02020" stroke-width="1.5"/>
 <path d="M220 238.5 L231 233 V244Z" fill="none" stroke="#333" stroke-width="1.2"/><path d="M226 238.5 L231 236 V241Z" fill="#2040b0"/>
 <circle cx="225" cy="257" r="4.5" fill="#fff" stroke="#333" stroke-width="1.2"/><path d="M228 260 l2.5 2.5" stroke="#333" stroke-width="1.5"/>
 <path d="M221 282 l4 -5 l3 2z" fill="#222"/><path d="M225 278 l6 -6 v4z" fill="#2050d0"/><circle cx="221" cy="281" r="1.5" fill="#d02020"/><circle cx="229" cy="281" r="1.5" fill="#2050d0"/>
 <ellipse cx="225.5" cy="295.5" rx="5.5" ry="4" fill="none" stroke="#333" stroke-width="1"/><circle cx="225.5" cy="295.5" r="3" fill="#2040c0"/>
 <rect x="219" y="308" width="13" height="13" fill="#30c030"/><path d="M221 317 h4 v-4 h4" stroke="#1a6a1a" stroke-width="1.3" fill="none"/>
 <rect x="220" y="329" width="9" height="6" fill="#8a40c0"/><rect x="221" y="330" width="4" height="4" fill="#e080f0"/><path d="M220 337.5 h11" stroke="#555"/>
 <rect x="220" y="347" width="8" height="11" fill="#e8f4fc" stroke="#7ab0d0" stroke-width="0.8"/><path d="M222 350 h4 M222 352 h4 M222 354 h4" stroke="#4a90c0" stroke-width="0.8"/><path d="M229 352 l2 2 l-2 2z" fill="#2040a0"/>
</svg>
<svg class="a" style="left:0;top:0;overflow:hidden" width="1300" height="695" viewBox="0 0 1300 695">
 <defs><clipPath id="c2d"><rect x="239" y="107" width="531" height="504"/></clipPath></defs>
 <rect x="235" y="107" width="4" height="505" fill="#3e4553"/>
 <rect x="239" y="105" width="1061" height="2" fill="#3a4250"/>
 <g clip-path="url(#c2d)">
  <rect x="239" y="107" width="531" height="504" fill="#212633"/>
  <g stroke="#767c84" stroke-width="0.9" fill="none">
   <line x1="269" y1="107" x2="306" y2="612"/>
   <line x1="274" y1="107" x2="310" y2="612"/>
   <line x1="279" y1="107" x2="314" y2="612"/>
   <line x1="299" y1="107" x2="337" y2="612"/>
   <line x1="455" y1="107" x2="455" y2="612"/>
   <line x1="476" y1="107" x2="476" y2="612"/>
   <line x1="479" y1="107" x2="479" y2="612"/>
  </g>
  <line x1="484.5" y1="107" x2="484.5" y2="612" stroke="#7aa0b0" stroke-width="0.9"/>
  <line x1="414.5" y1="107" x2="414.5" y2="196" stroke="#6a9ab0" stroke-width="1"/>
  <line x1="469" y1="174" x2="486" y2="174" stroke="#3a8ab0" stroke-width="1"/>
  <path d="M469.5 420 V459.5 H486" stroke="#3a8ab0" stroke-width="1" fill="none"/>
  <!-- top fitting -->
  <path d="M363 195 H466 V199 L461 208 H368 L363 199Z" fill="#1f2244"/>
  <rect x="362" y="194.5" width="104" height="4" fill="#1e2488"/>
  <path d="M368 199 V208 M461 199 V208" stroke="#1e2478" stroke-width="2" fill="none"/>
  <rect x="368.5" y="214.5" width="93" height="26" fill="none" stroke="#2f7aa0" stroke-width="1"/>
  <path d="M462 240 V265" stroke="#2f7aa0" stroke-width="1"/>
  <path d="M386.5 229 V210.5 H444.5 V265" stroke="#30c030" stroke-width="1.2" fill="none"/>
  <path d="M386 210.5 H445" stroke="#30c030" stroke-width="2"/>
  <path d="M347 264 L386.5 227" stroke="#2e9a50" stroke-width="1.6"/>
  <!-- bottom fitting -->
  <rect x="368.5" y="392" width="93" height="23.5" fill="none" stroke="#2f7aa0" stroke-width="1"/>
  <path d="M462 368 V392" stroke="#2f7aa0" stroke-width="1"/>
  <path d="M444.5 368 V423 M386.5 401 V423" stroke="#30c030" stroke-width="1" fill="none"/>
  <path d="M347.5 368.5 L386 405.5" stroke="#2e9a50" stroke-width="1.6"/>
  <path d="M368 422.5 H462 L465.5 431.5 H364.5Z" fill="#1f2246"/>
  <rect x="364" y="431" width="101.5" height="3" fill="#1e2388"/>
  <!-- green horizontal lines -->
  <line x1="239" y1="264.8" x2="768" y2="264.8" stroke="#2fb02f" stroke-width="1.3"/>
  <line x1="239" y1="367.8" x2="768" y2="367.8" stroke="#2fb02f" stroke-width="1.3"/>
  <!-- red duct -->
  <path d="M239 302.5 H403 L409 309 V324 L403 330 H239Z" fill="#ff2a10"/>
  <path d="M768 302.5 H427 L421 309 V324 L427 330 H768Z" fill="#ff2a10"/>
  <path d="M407.5 225 L415 217 L422.5 225 V405 L415 413 L407.5 405Z" fill="#ff2a10"/>
  <!-- white bars -->
  <rect x="386" y="214" width="58" height="2.5" fill="#e8e8e8"/>
  <rect x="383" y="223.5" width="64" height="4" fill="#c0c0c0"/><rect x="386" y="228.5" width="58" height="1.6" fill="#e0e0e0"/>
  <rect x="386" y="400.2" width="58" height="2" fill="#e0e0e0"/>
  <rect x="382.5" y="406.5" width="64" height="3" fill="#c8c8c8"/>
  <rect x="386" y="414" width="58" height="1.8" fill="#e0e0e0"/>
  <line x1="386" y1="419" x2="444" y2="419" stroke="#30c030" stroke-width="2"/>
  <path d="M471 264 V368 M474 264 V368" stroke="#d0d8d0" stroke-width="0.9"/>
  <!-- arrow -->
  <line x1="414.5" y1="433" x2="414.5" y2="520" stroke="#6aa8b8" stroke-width="1"/>
  <path d="M401 518.5 H428.5 L414.8 580Z" fill="#5aa0ae"/>
  <!-- text -->
  <rect x="554" y="95" width="6.2" height="38" fill="#b5ae2c"/><text x="567" y="133" font-family="Liberation Sans" font-size="60" fill="#b5ae2c" textLength="80" lengthAdjust="spacingAndGlyphs">6x6</text>
  <text x="544" y="209" font-family="Liberation Sans" font-size="60" fill="#b5ae2c" textLength="83" lengthAdjust="spacingAndGlyphs">235</text>
  <!-- compass -->
  <circle cx="709.5" cy="166" r="40" fill="none" stroke="#363b47" stroke-width="6"/>
  <rect x="691" y="148" width="37" height="36" fill="#6e737b"/>
  <text x="709.5" y="169" font-family="Liberation Sans" font-size="6" fill="#8a8e95" text-anchor="middle">TOP</text>
  <g font-family="Liberation Sans" font-size="12" font-weight="bold" fill="#7f848c" text-anchor="middle">
   <text x="709.5" y="132">N</text><text x="709.5" y="211">S</text><text x="670" y="171">W</text><text x="749" y="171">E</text>
  </g>
  <rect x="689" y="228" width="39" height="14" rx="5" fill="#5a5f68"/>
 </g>
</svg>
<svg class="a" style="left:0;top:0;overflow:hidden" width="1300" height="695" viewBox="0 0 1300 695">
 <defs>
  <clipPath id="c3d"><rect x="771" y="108" width="528" height="502"/></clipPath>
  <linearGradient id="cyl1" x1="0" y1="0" x2="1" y2="1" gradientUnits="objectBoundingBox">
   <stop offset="0" stop-color="#62d040"/><stop offset="0.45" stop-color="#52c048"/><stop offset="1" stop-color="#1f58b0"/>
  </linearGradient>
  <linearGradient id="cyl1b" gradientUnits="userSpaceOnUse" x1="1004" y1="248" x2="1020" y2="282">
   <stop offset="0" stop-color="#62d040"/><stop offset="0.5" stop-color="#4cb860"/><stop offset="1" stop-color="#2058b0"/>
  </linearGradient>
  <linearGradient id="cyl2" gradientUnits="userSpaceOnUse" x1="1180" y1="150" x2="1200" y2="188">
   <stop offset="0" stop-color="#66d444"/><stop offset="0.5" stop-color="#55c24c"/><stop offset="0.8" stop-color="#3a9a90"/><stop offset="1" stop-color="#2a6ab8"/>
  </linearGradient>
  <linearGradient id="flex1" gradientUnits="userSpaceOnUse" x1="915" y1="330" x2="975" y2="322">
   <stop offset="0" stop-color="#f272e2"/><stop offset="0.55" stop-color="#e866dc"/><stop offset="0.8" stop-color="#c45ad8"/><stop offset="1" stop-color="#a050d8"/>
  </linearGradient>
  <linearGradient id="flex2" gradientUnits="userSpaceOnUse" x1="1240" y1="0" x2="1280" y2="0">
   <stop offset="0" stop-color="#f070e0"/><stop offset="0.6" stop-color="#d860d8"/><stop offset="1" stop-color="#9050d0"/>
  </linearGradient>
 </defs>
 <rect x="768" y="107" width="532" height="505" fill="#212633"/>
 <g clip-path="url(#c3d)">
  <rect x="771" y="108" width="528" height="502" fill="#212633"/>
  <!-- background grid lines -->
  <g stroke="#6e2632" stroke-width="1" stroke-dasharray="9 3" fill="none" opacity="0.85">
   <line x1="771" y1="328.7" x2="1300" y2="517.5"/>
   <line x1="878" y1="612" x2="1300" y2="381"/>
   <line x1="771" y1="560" x2="880" y2="612"/>
   <line x1="1150" y1="108" x2="1300" y2="150"/>
  </g>
  <path d="M771 149 L1021 238 L1173 292 L1300 329 L1300 348.3 L1060 267.6 L820 169.8 L771 151Z" fill="#161b24"/>
  <path d="M771 151 L820 169.8 L1060 267.6 L1300 348.3" stroke="#5a6268" stroke-width="0.9" fill="none"/>
  <path d="M771 156 L820 174 L1060 278 L1300 359.8" stroke="#6a6a3a" stroke-width="0.9" fill="none"/>
  <path d="M771 162 L820 181.8 L1060 285 L1300 379" stroke="#6a2632" stroke-width="1" fill="none" opacity="0.8"/>
  <path d="M1150 283 L1300 339 M1150 291 L1300 346" stroke="#3a6a74" stroke-width="0.9" fill="none"/>
  <path d="M1198 326 L1212 320" stroke="#6a7078" stroke-width="2" fill="none"/>
  <g stroke="#4a5848" stroke-width="0.9" fill="none">
   <path d="M773 332 L829 351 L922 309"/>
   <path d="M1059 420 L1300 495"/>
  </g>
  <path d="M1059 487 L1086 473 M1061 490 L1088 476 M1088 500 L1115 486 M1090 503 L1117 489" stroke="#80858c" stroke-width="0.9" fill="none"/>
  <path d="M1073 481 L1101 493" stroke="#b07830" stroke-width="1.5"/>
  <path d="M1200 610 L1252 594 L1300 610 M1252 594 L1256 610" stroke="#6a7050" stroke-width="1" fill="none"/>
  <!-- main rectangular duct -->
  <path d="M771 108 L926 108 L968 124 L1100 171 L1152 189 L1216 213 L1300 249 L1300 329 L1173 292 L1021 238 L771 149 Z" fill="#5dcb42"/>
  <g stroke="#f4f8f0" stroke-width="1.4" fill="none" stroke-linejoin="round">
   <path d="M771 149 L1021 238 L1173 292 L1300 329"/>
   <path d="M814 108 L932.5 149.3 L1107 211.6 L1173 237 L1251.5 272 L1300 290"/>
   <path d="M926 108 L968 124 L1100 171 L1152 189 L1216 213 L1300 249"/>
  </g>
  <g stroke="#f0f0e8" stroke-width="1.3">
   <path d="M932.5 149.3 L973 126 M1107 211.6 L1152 189 M1173 237 L1216 213 M1251.5 272 L1296 248"/>
  </g>
  <g stroke="#d9b48a" stroke-width="3">
   <path d="M797 108 V159 M932 149 V206 M1107.5 212 V269 M1173 237 V292 M1251.5 272 V314"/>
  </g>
  <g stroke="#fff" stroke-width="0.8" opacity="0.8">
   <path d="M795.3 108 V158 M798.7 108 V160 M930.3 149 V205 M933.7 149 V207 M1105.8 212 V268 M1109.2 212 V270 M1171.3 237 V291 M1174.7 237 V293 M1249.8 272 V313 M1253.2 272 V315"/>
  </g>
  <!-- branch 2 (upper right) -->
  <path d="M1128 178 L1218 131.4 C1234 135 1246 150 1241.8 162.2 L1180 197.8 C1165 204 1132 198 1128 178Z" fill="url(#cyl2)"/>
  <path d="M1128 178 L1218 131.4 M1180 197.8 L1241.8 162.2" stroke="#e8f0e8" stroke-width="1"/>
  <path d="M1128 178 C1132 198 1165 204 1180 197.8 M1135 175 C1140 192 1166 198 1183 194" stroke="#e8f0e8" stroke-width="0.8" fill="none" opacity="0.55"/>
  <path d="M1279 242 L1279 175 C1279 122 1250 112 1218 131.4 C1234 135 1246 150 1241.8 162.2 C1240 166 1239 171 1238 175 L1238 242 Z" fill="url(#flex2)"/>
<path d="M1279 240 Q1258.5 245 1238 240 M1279 235.6 Q1258.5 240.6 1238 235.6 M1279 231.2 Q1258.5 236.2 1238 231.2 M1279 226.8 Q1258.5 231.8 1238 226.8 M1279 222.4 Q1258.5 227.4 1238 222.4 M1279 218 Q1258.5 223 1238 218 M1279 213.6 Q1258.5 218.6 1238 213.6 M1279 209.2 Q1258.5 214.2 1238 209.2 M1279 204.8 Q1258.5 209.8 1238 204.8 M1279 200.4 Q1258.5 205.4 1238 200.4 M1279 196 Q1258.5 201 1238 196 M1279 191.6 Q1258.5 196.6 1238 191.6 M1279 187.2 Q1258.5 192.2 1238 187.2 M1279 182.8 Q1258.5 187.8 1238 182.8 M1279 178.4 Q1258.5 183.4 1238 178.4 M1279 174 Q1258.5 179 1238 174 M1278.2 160.8 Q1259.8 172 1238.3 173.8 M1275.9 148.9 Q1259.9 165 1238.6 172.6 M1272.3 139.3 Q1259 158.9 1238.9 171.3 M1267.4 131.9 Q1257.3 153.9 1239.2 170 M1261.5 126.7 Q1254.9 150 1239.5 168.7 M1254.6 123.5 Q1252 147 1239.9 167.4 M1247 122.3 Q1248.6 145 1240.3 166.1 M1238.7 123 Q1234.7 144.2 1240.7 164.9 M1229.9 125.5 Q1230.7 146 1241.2 163.7 M1220.8 129.8 Q1227 148.8 1241.6 162.5" stroke="#fff" stroke-width="0.8" fill="none" opacity="0.55"/>
<path d="M1279 240 Q1258.5 245 1238 240 M1279 235.6 Q1258.5 240.6 1238 235.6 M1279 231.2 Q1258.5 236.2 1238 231.2 M1279 226.8 Q1258.5 231.8 1238 226.8 M1279 222.4 Q1258.5 227.4 1238 222.4 M1279 218 Q1258.5 223 1238 218 M1279 213.6 Q1258.5 218.6 1238 213.6 M1279 209.2 Q1258.5 214.2 1238 209.2 M1279 204.8 Q1258.5 209.8 1238 204.8 M1279 200.4 Q1258.5 205.4 1238 200.4 M1279 196 Q1258.5 201 1238 196 M1279 191.6 Q1258.5 196.6 1238 191.6 M1279 187.2 Q1258.5 192.2 1238 187.2 M1279 182.8 Q1258.5 187.8 1238 182.8 M1279 178.4 Q1258.5 183.4 1238 178.4 M1279 174 Q1258.5 179 1238 174" stroke="#8a38a8" stroke-width="0.9" fill="none" opacity="0.45" transform="translate(0 2)"/>
<path d="M1279 242 L1279 175 C1279 122 1250 112 1218 131.4" stroke="#f8e8f8" stroke-width="1" fill="none" opacity="0.8"/>

  <path d="M1279 225 L1300 232 V262 L1280 255 Z" fill="#e860d8"/>
  <path d="M1240 228 L1300 250 V262 L1240 240Z" fill="#8a8a8a" opacity="0.9"/>
  <!-- re-draw duct top face portion in front of flex2 bottom -->
  <path d="M1173 237 L1216 213 L1300 249 L1300 290 L1251.5 272 Z" fill="#5dcb42"/>
  <path d="M1216 213 L1300 249 M1173 237 L1216 213 M1251.5 272 L1296 248 M1173 237 L1251.5 272 L1300 290" stroke="#f0f4ec" stroke-width="1.3" fill="none"/>
  <!-- viewcube (translucent) -->
  <ellipse cx="1242" cy="196" rx="36" ry="15" fill="none" stroke="#8a9098" stroke-width="5" opacity="0.35"/>
  <g opacity="0.72">
   <path d="M1219 171 L1243.5 164.6 L1264 168 L1264 202 L1243.5 206 L1219 200Z" fill="#d4d7db"/>
   <path d="M1219 171 L1240 160 L1264 164 L1243.5 170Z" fill="#e8eaec"/>
  </g>
  <path d="M1219 171 L1243.5 170 L1264 164 M1243.5 170 V206" stroke="#f4f4f4" stroke-width="0.8" fill="none" opacity="0.8"/>
  <text x="1221" y="192" font-family="Liberation Sans" font-size="8" font-weight="bold" fill="#6a6e74" transform="rotate(8 1221 192)" textLength="21" lengthAdjust="spacingAndGlyphs">FRONT</text>
  <text x="1247" y="195" font-family="Liberation Sans" font-size="7" font-weight="bold" fill="#9a7aa0" transform="rotate(-35 1247 195)">RIGHT</text>
  <rect x="1223" y="247" width="37" height="13" rx="4" fill="#a8b0a8" opacity="0.55"/>
  <text x="1227" y="257" font-family="Liberation Sans" font-size="9" fill="#f0f0f0" opacity="0.9">WCS</text>
  <!-- branch 1 -->
  <ellipse cx="1068.4" cy="231.4" rx="23" ry="27.5" transform="rotate(-25 1068.4 231.4)" fill="#60cc48" stroke="#eef4e8" stroke-width="1.1"/>
  <ellipse cx="1062" cy="239.5" rx="15" ry="21.5" transform="rotate(-25 1062 239.5)" fill="#52b85a" stroke="#eef4e8" stroke-width="1"/>
  <path d="M963.6 271 L1046 228 C1054 232 1060 244 1062 260 L983 302 Z" fill="url(#cyl1b)"/>
  <path d="M963.6 271 L1046 228 M983 302 L1062 260" stroke="#e8f0e8" stroke-width="1.1"/>
  <path d="M1046 228 C1054 232 1060 244 1062 260" stroke="#e8f0e8" stroke-width="1" fill="none"/>
  <path d="M1041 231 C1049 235 1055 247 1057 262" stroke="#e8f0e8" stroke-width="0.8" fill="none"/>
  <!-- flex 1 -->
  <!-- diffuser 1 -->
  <path d="M831.5 427 L915 384 L1041.6 416.8 L946.6 468 Z" fill="#9a9a9a" stroke="#f0f0f0" stroke-width="1.3" stroke-linejoin="round"/>
  <path d="M871.8 419.7 L943.8 439.8 L943.8 447 L871.8 427Z" fill="#e056d0"/>
  <path d="M943.8 439.8 L1001 416.8 L1001 424 L943.8 447Z" fill="#8a4ad8"/>
  <path d="M871.8 419.7 L935 393.8 L1001 416.8 L943.8 439.8 Z" fill="#ec62dc"/>
  <path d="M831.5 427 L871.8 427 M946.6 468 L943.8 447 M1041.6 416.8 L1001 420" stroke="#e8e8e8" stroke-width="0.9"/>
  <path d="M871.8 419.7 L1001 416.8 M935 393.8 L943.8 439.8" stroke="#f8d8f4" stroke-width="0.7" opacity="0.7"/>
  <path d="M871.8 419.7 L935 393.8 L1001 416.8 L943.8 439.8 Z" fill="none" stroke="#f8e0f4" stroke-width="0.8" opacity="0.8"/>
  
  <path d="M917 426 L918 335 C919 300 935 276 961 270 L984 300 C968 308 961 322 960 335 L960 426 Z" fill="url(#flex1)"/>
<path d="M917 424 Q938.5 429 960 424 M917 419.4 Q938.5 424.4 960 419.4 M917 414.8 Q938.5 419.8 960 414.8 M917 410.2 Q938.5 415.2 960 410.2 M917 405.6 Q938.5 410.6 960 405.6 M917 401 Q938.5 406 960 401 M917 396.4 Q938.5 401.4 960 396.4 M917 391.8 Q938.5 396.8 960 391.8 M917 387.2 Q938.5 392.2 960 387.2 M917 382.6 Q938.5 387.6 960 382.6 M917 378 Q938.5 383 960 378 M917 373.4 Q938.5 378.4 960 373.4 M917 368.8 Q938.5 373.8 960 368.8 M917 364.2 Q938.5 369.2 960 364.2 M917 359.6 Q938.5 364.6 960 359.6 M917 355 Q938.5 360 960 355 M917 350.4 Q938.5 355.4 960 350.4 M917 345.8 Q938.5 350.8 960 345.8 M917 341.2 Q938.5 346.2 960 341.2 M917 336.6 Q938.5 341.6 960 336.6 M917 332 Q938.5 337 960 332 M918.8 324.1 Q938.9 332.4 960.5 330.8 M920.7 314 Q939.6 325.1 961.5 326.5 M923.5 304.8 Q941.2 318.1 962.9 322.3 M927.2 296.5 Q943.5 311.7 964.9 318.2 M931.8 289.2 Q946.7 305.8 967.3 314.3 M937.3 282.9 Q950.6 300.5 970.2 310.5 M943.6 277.6 Q955.2 295.9 973.7 306.9 M950.7 273.6 Q960.5 292 977.8 303.7 M958.5 270.6 Q966.6 288.8 982.5 300.8" stroke="#fff" stroke-width="0.8" fill="none" opacity="0.55"/>
<path d="M917 424 Q938.5 429 960 424 M917 419.4 Q938.5 424.4 960 419.4 M917 414.8 Q938.5 419.8 960 414.8 M917 410.2 Q938.5 415.2 960 410.2 M917 405.6 Q938.5 410.6 960 405.6 M917 401 Q938.5 406 960 401 M917 396.4 Q938.5 401.4 960 396.4 M917 391.8 Q938.5 396.8 960 391.8 M917 387.2 Q938.5 392.2 960 387.2 M917 382.6 Q938.5 387.6 960 382.6 M917 378 Q938.5 383 960 378 M917 373.4 Q938.5 378.4 960 373.4 M917 368.8 Q938.5 373.8 960 368.8 M917 364.2 Q938.5 369.2 960 364.2 M917 359.6 Q938.5 364.6 960 359.6 M917 355 Q938.5 360 960 355 M917 350.4 Q938.5 355.4 960 350.4 M917 345.8 Q938.5 350.8 960 345.8 M917 341.2 Q938.5 346.2 960 341.2 M917 336.6 Q938.5 341.6 960 336.6 M917 332 Q938.5 337 960 332" stroke="#8a38a8" stroke-width="0.9" fill="none" opacity="0.45" transform="translate(0 2)"/>
<path d="M917 426 L918 335 C919 300 935 276 961 270" stroke="#f8e8f8" stroke-width="1" fill="none" opacity="0.8"/>

  <!-- cursor crosshair -->
  <path d="M1040.5 312 V376" stroke="#6a6ad0" stroke-width="1.2"/>
  <path d="M1026 363 L1071 338.7" stroke="#6a9a60" stroke-width="1"/>
  <path d="M1023 349 L1073 365.5" stroke="#a84058" stroke-width="1"/>
  <!-- UCS icon -->
  <text x="800" y="533" font-family="Liberation Sans" font-size="12" fill="#3060c8">Z</text>
  <path d="M806 540 V605" stroke="#3060c8" stroke-width="2"/>
  <path d="M806 605 L835 590" stroke="#30a040" stroke-width="2"/>
  <path d="M806 605 L832 612" stroke="#e04030" stroke-width="2.5"/>
  <!-- yellow labels -->
  <g font-family="Liberation Sans" fill="#e6dc58" font-size="16">
   <text transform="translate(1153 565) rotate(20) skewX(-25)" textLength="48" lengthAdjust="spacingAndGlyphs">S-5</text>
   <text transform="translate(1121 583) rotate(20) skewX(-25)" textLength="56" lengthAdjust="spacingAndGlyphs">10Ø</text>
   <text transform="translate(1089 598) rotate(20) skewX(-25)" textLength="52" lengthAdjust="spacingAndGlyphs">235</text>
  </g>
  <!-- tooltip -->
  <rect x="1052" y="367" width="68" height="17" fill="#8a8c8e"/>
  <text x="1056" y="379.5" font-family="Liberation Sans" font-size="10.5" fill="#1a1a1a">Select Start :</text>
  <rect x="1123" y="367" width="55" height="17" fill="#fff"/>
  <rect x="1126" y="369" width="46" height="13" fill="#2a72dc"/>
  <text x="1127" y="379.5" font-family="Liberation Sans" font-size="10.5" fill="#fff">71'-1 3/8"</text>
  <rect x="1181" y="367" width="65.5" height="17" fill="#5cbd5c"/>
  <text x="1186" y="379.5" font-family="Liberation Sans" font-size="10.5" fill="#102010">46'-8 13/16"</text>
  <!-- nav bar -->
  <rect x="1271" y="281" width="29" height="175" rx="3" fill="#959ba4" opacity="0.3"/>
  <g stroke="#9aa0a8" stroke-width="1" fill="none" opacity="0.6">
   <circle cx="1284" cy="300" r="7"/><path d="M1276 370 L1284 364 L1292 370 L1284 376Z"/><path d="M1284 390 V405 M1277 398 H1291"/><rect x="1278" y="420" width="12" height="10"/>
  </g>
  <!-- window controls -->
  <path d="M1255 121 H1264" stroke="#e0e0e0" stroke-width="1.5"/>
  <rect x="1268" y="116" width="8" height="8" fill="none" stroke="#e0e0e0" stroke-width="1.3"/>
  <path d="M1270 116 V114 H1278 V122 H1276" stroke="#e0e0e0" stroke-width="1" fill="none"/>
  <path d="M1285 115 L1293 123 M1293 115 L1285 123" stroke="#e8e8e8" stroke-width="1.6"/>
  <text x="776" y="122" font-family="Liberation Sans" font-size="10.5" fill="#d8e8d0" opacity="0.85">[+][Custom View][Conceptual]</text>
 </g>
 <!-- blue border -->
 <rect x="772.5" y="109.5" width="526" height="498.5" fill="none" stroke="#2468c0" stroke-width="3.2" opacity="0.8"/>
</svg>
<div class="a" style="left:504px;top:537px;width:411px;height:13px;background:#5a5e66"></div>
<div class="a" style="left:504px;top:554px;width:411px;height:13px;background:#5a5e66"></div>
<div class="a" style="left:504px;top:571px;width:417px;height:13px;background:#5a5e66"></div>
<div class="a" style="left:505px;top:538px;font-family:'Liberation Mono',monospace;font-size:10px;line-height:13px;color:#cfd3d8;white-space:pre">&lt;Absolute Polar&gt; Select Next Point or [Undo/Endrun/Riser/Slope/Abs]</div>
<div class="a" style="left:505px;top:555px;font-family:'Liberation Mono',monospace;font-size:10px;line-height:13px;color:#cfd3d8;white-space:pre">&lt;Relative Polar&gt; Select Next Point or [Undo/Endrun/Riser/Slope/Abs]</div>
<div class="a" style="left:505px;top:572px;font-family:'Liberation Mono',monospace;font-size:10px;line-height:13px;color:#cfd3d8;white-space:pre">&lt;Relative Polar&gt; Select Next Point or [Undo/Endrun/Riser/Slope/Abs]E</div>
<div class="a" style="left:453px;top:588px;width:46px;height:21px;background:#2b323d"></div>
<svg class="a" style="left:453px;top:588px" width="46" height="21">
 <g fill="#c8ccd2"><rect x="2" y="3" width="1.2" height="1.2"/><rect x="2" y="6" width="1.2" height="1.2"/><rect x="2" y="9" width="1.2" height="1.2"/><rect x="2" y="12" width="1.2" height="1.2"/><rect x="2" y="15" width="1.2" height="1.2"/>
 <rect x="5" y="3" width="1.2" height="1.2"/><rect x="5" y="6" width="1.2" height="1.2"/><rect x="5" y="9" width="1.2" height="1.2"/><rect x="5" y="12" width="1.2" height="1.2"/><rect x="5" y="15" width="1.2" height="1.2"/></g>
 <path d="M11.5 6.5 L18.5 13.5 M18.5 6.5 L11.5 13.5" stroke="#e0e3e8" stroke-width="1.6"/>
 <path d="M30 17 L37 10" stroke="#e0e3e8" stroke-width="2.2"/>
 <path d="M36 11 a4 4 0 1 0 5 -6 l-2 3 h-2 v-2 l2 -2.5 a4 4 0 0 0 -3 7.5z" fill="#e0e3e8"/>
</svg>
<div class="a" style="left:499px;top:588px;width:589px;height:21px;background:#fff"></div>
<svg class="a" style="left:499px;top:588px" width="589" height="21">
 <rect x="3.5" y="5.5" width="13" height="10" fill="none" stroke="#666" stroke-width="1"/>
 <rect x="3.5" y="5.5" width="13" height="2" fill="#888"/>
 <path d="M6 11 l2 1 l-2 1" stroke="#666" fill="none" stroke-width="0.8"/>
 <path d="M19 9 h5 l-2.5 3z" fill="#555"/>
 <path d="M578 14 h6 l-3 -4z" fill="#555"/>
</svg>
<div class="a" style="left:529px;top:593px;font-family:'Liberation Mono',monospace;font-size:10px;line-height:12px;color:#111;white-space:pre"><b>ADDDOBJ</b> Select Start :</div>
<div class="a" style="left:213px;top:612px;width:13px;height:42px;background:#2b323d"></div>
<div class="a" style="left:215px;top:621px;width:2px;height:6px;border-left:1px solid #8a9098;border-right:1px solid #8a9098"></div>
<div class="a" style="left:226px;top:612px;width:1074px;height:42px;background:#f0f0f0"></div>
<div class="a" style="left:230px;top:617px;width:505px;height:19px;background:#e6e6e6;border:1px solid #b8b8b8"></div>
<div class="a" style="left:233px;top:619px;font-size:11px;line-height:14px;color:#222">Supply Air</div>
<svg class="a" style="left:720px;top:621px" width="12" height="10"><path d="M2 3 L6 7 L10 3" stroke="#444" fill="none" stroke-width="1.1"/></svg>
<div class="a" style="left:739px;top:617px;width:24px;height:20px;background:#e4e4e4;border:1px solid #c4c4c4"></div>
<svg class="a" style="left:742px;top:619px" width="18" height="16"><rect x="2" y="4" width="12" height="10" fill="#f0e0a0" stroke="#555" stroke-width="1"/><rect x="5" y="7" width="6" height="4" fill="#555"/><path d="M9 2 h6 v6" stroke="#3a7ad0" stroke-width="1.5" fill="none"/></svg>
<div class="a" style="left:766px;top:617px;width:530px;height:19px;background:#e6e6e6;border:1px solid #b8b8b8"></div>
<div class="a" style="left:769px;top:619px;font-size:11px;line-height:14px;color:#222">None</div>
<svg class="a" style="left:1281px;top:621px" width="12" height="10"><path d="M2 3 L6 7 L10 3" stroke="#444" fill="none" stroke-width="1.1"/></svg>
<!-- layout tabs -->
<div class="a" style="left:0;top:652px;width:226px;height:2px;background:#2e3542"></div>
<div class="a" style="left:0;top:654px;width:1300px;height:41px;background:#222a36"></div>
<svg class="a" style="left:0;top:654px" width="300" height="20">
 <path d="M10 16 Q14 16 15 10 L16 5 Q17 1 21 1 H52 Q56 1 57 5 L58 10 Q59 16 63 16Z" fill="#3a4250"/>
 <path d="M57 16 Q61 16 62 10 L63 5 Q64 1 68 1 H106 Q110 1 111 5 L112 10 Q113 16 117 16Z" fill="#2e3542"/>
 <path d="M112 16 Q116 16 117 10 L118 5 Q119 1 123 1 H161 Q165 1 166 5 L167 10 Q168 16 172 16Z" fill="#2e3542"/>
 <rect x="172" y="2" width="18" height="14" rx="5" fill="#2e3542"/>
 <path d="M177 9 H186 M181.5 4.5 V13.5" stroke="#c9ced6" stroke-width="1.5"/>
</svg>
<div class="a" style="left:19px;top:656px;font-size:11px;line-height:13px;color:#eef1f5;font-weight:bold">Model</div>
<div class="a" style="left:68px;top:656px;font-size:11px;line-height:13px;color:#c3c8d0">Layout1</div>
<div class="a" style="left:123px;top:656px;font-size:11px;line-height:13px;color:#c3c8d0">Layout2</div>
<div class="a" style="left:0;top:693px;width:1300px;height:2px;background:#151a22"></div>
<svg class="a" style="left:780px;top:670px" width="520" height="25" viewBox="780 670 520 25">
 <g fill="#363e4b">
  <rect x="797" y="673" width="40" height="20"/>
  <rect x="839" y="673" width="54" height="20"/>
  <rect x="895" y="673" width="87" height="20"/>
  <rect x="984" y="673" width="55" height="20"/>
  <rect x="1040" y="673" width="89" height="20"/>
  <rect x="1131" y="673" width="34" height="20"/>
  <rect x="1166" y="673" width="20" height="20"/>
  <rect x="1188" y="673" width="20" height="20"/>
  <rect x="1210" y="673" width="46" height="20"/>
  <rect x="1258" y="673" width="40" height="20"/>
 </g>
 <g fill="#5a8fd2"><rect x="984" y="673" width="19" height="20"/><rect x="1005" y="673" width="19" height="20"/><rect x="1041" y="673" width="19" height="20"/></g>
 <text x="800" y="687" font-family="Liberation Sans" font-size="10.5" fill="#e8ebf0" textLength="33" lengthAdjust="spacingAndGlyphs">MODEL</text>
 <g stroke="#dfe3e8" stroke-width="1.2" fill="none">
  <path d="M844 677 V689 M848 677 V689 M852 677 V689 M842 679.5 H855 M842 683 H855 M842 686.5 H855"/>
  <path d="M899.5 676 V689.5 H912"/>
  <circle cx="925" cy="683" r="5.5"/><path d="M921 688 L931 678 M925 683 H933"/>
  <path d="M965 676 L972 690" stroke="#c04040"/><path d="M959 683 h4" stroke="#888"/>
  <path d="M988 688 L999 677 M988 689.5 H999" stroke="#fff"/>
  <rect x="1009" y="677" width="11" height="11" stroke="#fff"/>
  <path d="M1172 683 H1181 M1176.5 678.5 V687.5" stroke-width="1.8"/>
  <rect x="1192" y="676" width="5" height="5"/><circle cx="1203" cy="681" r="3"/><path d="M1194 690 L1197 685 L1200 690Z"/>
  <rect x="1262.5" y="677.5" width="13" height="11"/><path d="M1265 686 l3 -3 M1273 680 l-3 3"/>
  <path d="M1282 677 H1296 M1282 683 H1296 M1282 689 H1296" stroke-width="1.8"/>
 </g>
 <g fill="#dfe3e8">
  <circle cx="864" cy="679" r="1"/><circle cx="868" cy="679" r="1"/><circle cx="872" cy="679" r="1"/>
  <circle cx="864" cy="683" r="1"/><circle cx="868" cy="683" r="1"/><circle cx="872" cy="683" r="1"/>
  <circle cx="864" cy="687" r="1"/><circle cx="868" cy="687" r="1"/><circle cx="872" cy="687" r="1"/>
  <path d="M883 681 h6 l-3 3z"/><path d="M939 681 h6 l-3 3z"/><path d="M974 681 h6 l-3 3z"/><path d="M1028 681 h6 l-3 3z"/>
  <path d="M1120 681 h6 l-3 3z"/><path d="M1155 681 h6 l-3 3z"/>
  <path d="M1045 691 L1050 677 L1055 691 L1050 688Z" fill="#fff"/><circle cx="1056" cy="677" r="2" fill="none" stroke="#fff"/>
  <path d="M1064 691 L1069 677 L1074 691 L1069 688Z"/>
  <path d="M1084 691 L1089 677 L1094 691 L1089 688Z"/>
  <text x="1105" y="687" font-family="Liberation Sans" font-size="10" fill="#e0e3e8">1:1</text>
  <circle cx="1141.5" cy="683" r="5"/>
 </g>
 <circle cx="1141.5" cy="683" r="2" fill="#363e4b"/>
 <g stroke="#dfe3e8" stroke-width="2"><path d="M1141.5 676 v14 M1134.5 683 h14 M1136.5 678 l10 10 M1146.5 678 l-10 10"/></g>
 <rect x="1214" y="683" width="8" height="8" fill="#f0b020"/><path d="M1218 676 V684 M1214 679 H1226" stroke="#5a9ae0" stroke-width="1.5"/>
 <path d="M1224 686 l3 3 l5 -6" stroke="#30c040" stroke-width="2" fill="none"/>
 <path d="M1238 678 h5 l1 3 h6 v10 h-12z" fill="none" stroke="#c8a070" stroke-width="1.2"/>
</svg>
</body></html>
